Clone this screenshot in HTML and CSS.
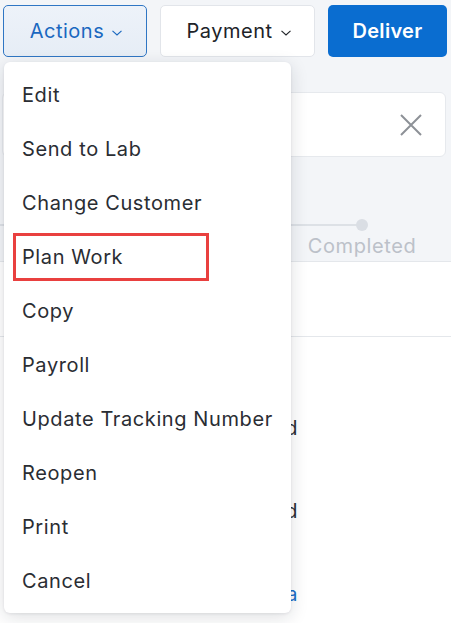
FILE: index.html
```html
<!DOCTYPE html>
<html>
<head>
<meta charset="utf-8">
<link rel="stylesheet" href="styles.css">
</head>
<body>
<div class="page">
  <div class="toolbar">
    <button class="btn btn-actions">Actions
      <svg class="chev" viewBox="0 0 10 6" width="10" height="6"><path d="M0.5 0.8 L5 5 L9.5 0.8" fill="none" stroke="currentColor" stroke-width="1.1"/></svg>
    </button>
    <button class="btn btn-payment">Payment
      <svg class="chev" viewBox="0 0 10 6" width="10" height="6"><path d="M0.5 0.8 L5 5 L9.5 0.8" fill="none" stroke="currentColor" stroke-width="1.1"/></svg>
    </button>
    <button class="btn btn-deliver">Deliver</button>
  </div>

  <div class="content">
    <div class="card">
      <svg class="close" viewBox="0 0 22 22" width="22" height="22"><path d="M1 1 L21 21 M21 1 L1 21" fill="none" stroke="currentColor" stroke-width="2"/></svg>
    </div>
    <div class="stepper">
      <div class="track"></div>
      <div class="step">
        <span class="dot"></span>
        <span class="step-label">Completed</span>
      </div>
    </div>
    <div class="band"></div>
    <div class="details">
      <div class="row"><span class="label">Received</span></div>
      <div class="row"><span class="label">Delivered</span></div>
      <div class="row"><span class="label link">Media</span></div>
    </div>
  </div>

  <div class="menu">
    <div class="item">Edit</div>
    <div class="item">Send to Lab</div>
    <div class="item">Change Customer</div>
    <div class="item"><span class="hl">Plan Work</span></div>
    <div class="item">Copy</div>
    <div class="item">Payroll</div>
    <div class="item">Update Tracking Number</div>
    <div class="item">Reopen</div>
    <div class="item">Print</div>
    <div class="item">Cancel</div>
  </div>
</div>
</body>
</html>
```

FILE: styles.css
```css
* { box-sizing: border-box; }
html, body {
  margin: 0;
  padding: 0;
  background: #f3f5f8;
  font-family: "Inter", "Liberation Sans", sans-serif;
  color: #24272c;
}
.page {
  position: relative;
  width: 451px;
  height: 623px;
  overflow: hidden;
}
.toolbar {
  display: flex;
  gap: 13px;
  padding: 5px 4px 0 3px;
  height: 57px;
}
.btn {
  height: 52px;
  border-radius: 5px;
  font-family: inherit;
  font-size: 20px;
  letter-spacing: 0.5px;
  display: flex;
  align-items: center;
  justify-content: center;
  gap: 8px;
  padding: 0;
  cursor: pointer;
}
.btn-actions {
  width: 144px;
  border: 1px solid #2f76c4;
  background: linear-gradient(180deg, #edf2f9 0%, #e6edf6 100%);
  color: #1a68c0;
  padding-left: 2px;
}
.btn-payment {
  width: 155px;
  border: 1px solid #e2e5ea;
  background: #ffffff;
  color: #202328;
  padding-left: 2px;
}
.btn-deliver {
  width: 119px;
  border: none;
  background: #0a6dd0;
  color: #ffffff;
  font-weight: 600;
  letter-spacing: 0.3px;
}
.chev { margin-top: 3px; }

.content {
  display: flex;
  flex-direction: column;
}
.card {
  margin: 35px 5px 0 2px;
  height: 65px;
  background: #ffffff;
  border: 1px solid #e6e9ed;
  border-radius: 6px;
  display: flex;
  align-items: center;
  justify-content: flex-end;
  padding-right: 23px;
  color: #8d9197;
}
.stepper {
  height: 104px;
  display: grid;
  grid-template-columns: 1fr 110px;
  padding-right: 34px;
}
.track {
  margin-top: 67px;
  height: 2px;
  background: #dde1e6;
  margin-right: -55px;
}
.step {
  display: flex;
  flex-direction: column;
  align-items: center;
  padding-top: 62px;
}
.dot {
  width: 12px;
  height: 12px;
  border-radius: 50%;
  background: #dadee4;
}
.step-label {
  margin-top: 3px;
  font-size: 20px;
  line-height: 24px;
  letter-spacing: 0.6px;
  color: #bcc1c9;
}
.band {
  height: 76px;
  background: #ffffff;
  border-top: 1px solid #e4e7eb;
  border-bottom: 1px solid #e4e7eb;
}
.details {
  background: #ffffff;
  display: flex;
  flex-direction: column;
  padding-top: 79px;
  gap: 59px;
  height: 330px;
}
.row {
  width: 298px;
  text-align: right;
  font-size: 20px;
  line-height: 24px;
  letter-spacing: 0.5px;
  color: #2a2d33;
}
.row .link { color: #1a6fc7; }

.menu {
  position: absolute;
  left: 4px;
  top: 62px;
  width: 287px;
  padding: 6px 0 5px;
  background: #ffffff;
  border-radius: 6px;
  box-shadow: 0 4px 18px rgba(20, 30, 45, 0.14), 0 1px 3px rgba(20, 30, 45, 0.08);
}
.item {
  height: 54px;
  display: flex;
  align-items: center;
  padding-left: 18px;
  font-size: 20px;
  letter-spacing: 0.6px;
  color: #2a2d33;
  white-space: nowrap;
}
.hl {
  display: flex;
  align-items: center;
  width: 196px;
  height: 48px;
  margin-left: -9px;
  padding-left: 6px;
  border: 3px solid #e9403f;
}
```
